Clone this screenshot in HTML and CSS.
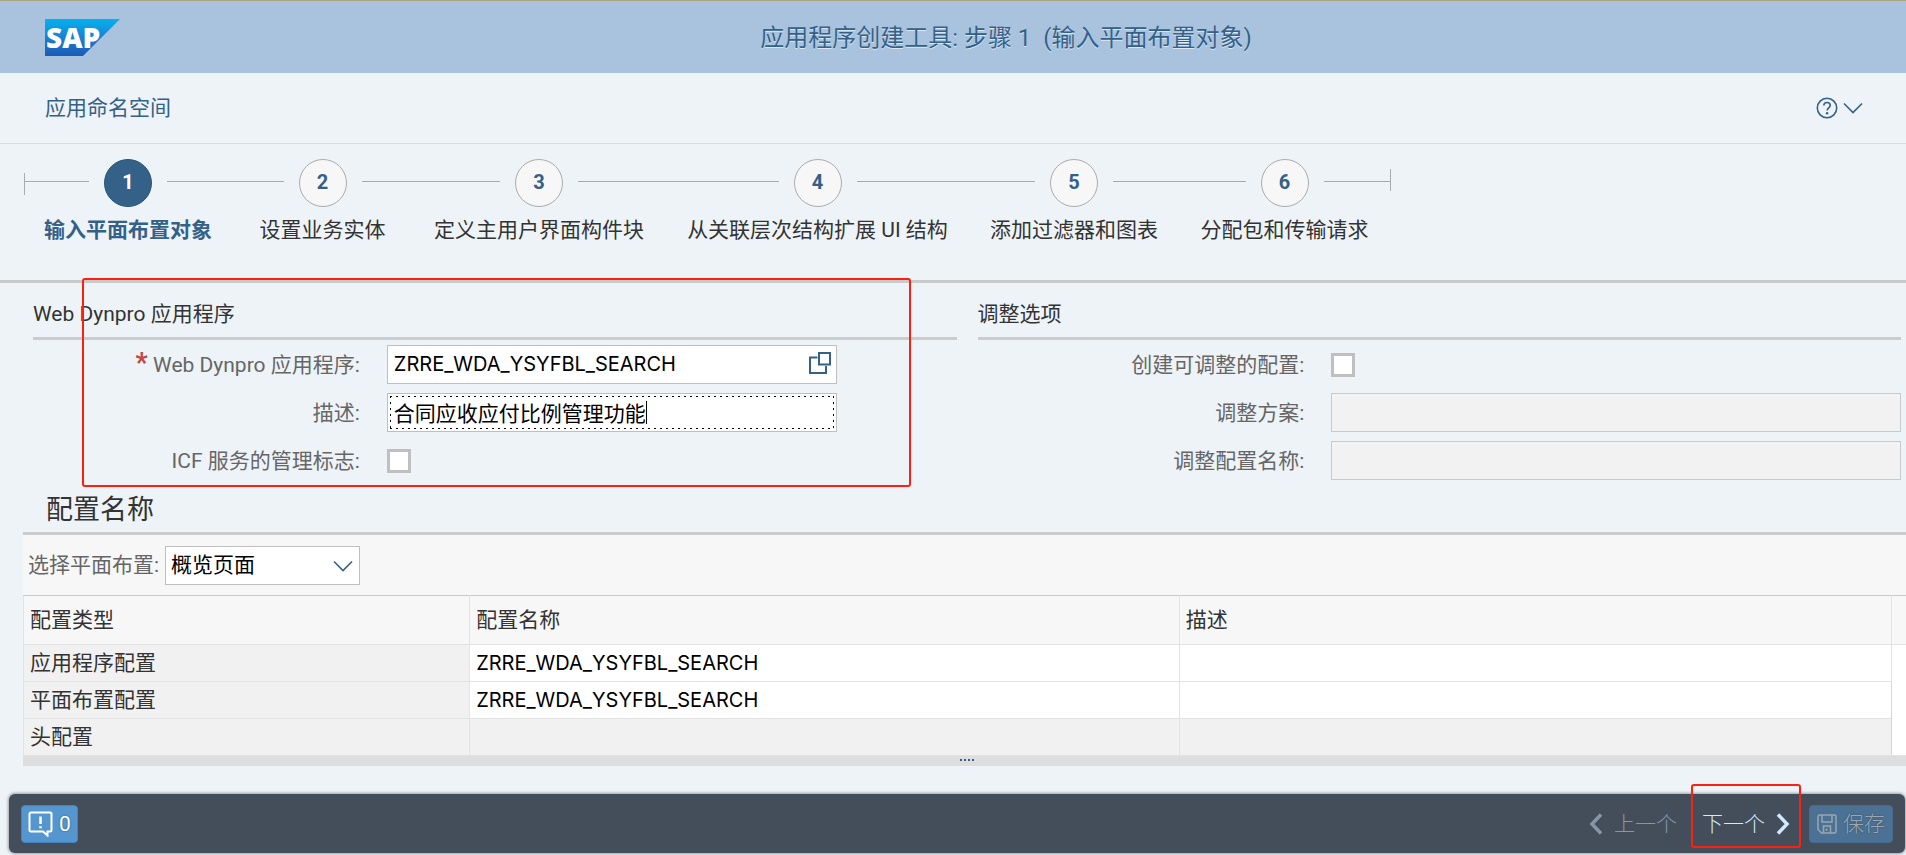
FILE: index.html
```html
<!DOCTYPE html>
<html lang="zh-CN">
<head>
<meta charset="utf-8">
<meta name="viewport" content="width=device-width, initial-scale=1">
<title>应用程序创建工具</title>
<link rel="stylesheet" href="styles.css">
</head>
<body>
<div class="page">
  <header class="shell">
    <svg class="logo" viewBox="0 0 75 37" role="img" aria-label="SAP">
      <defs><linearGradient id="sapBlue" x1="0" y1="0" x2="0" y2="1"><stop offset="0" stop-color="#04b3ee"/><stop offset=".5" stop-color="#1b7fd3"/><stop offset="1" stop-color="#1c5bb5"/></linearGradient></defs>
      <path d="M0 0H75L38 37H0Z" fill="url(#sapBlue)"/>
      <text class="logo-text" x="1" y="29">SAP</text>
    </svg>
    <h1 class="shell-title">应用程序创建工具: 步骤 1&nbsp; (输入平面布置对象)</h1>
  </header>

  <div class="subbar">
    <a class="namespace" href="#">应用命名空间</a>
    <button class="help" type="button" aria-label="帮助">
      <svg width="22" height="22" viewBox="0 0 22 22"><circle cx="11" cy="11" r="9.7"/><path d="M7.8 8.6C7.8 6.6 9.2 5.5 11 5.5s3.2 1.1 3.2 2.9c0 2.4-3 2.5-3 5.1"/><circle class="dot" cx="11.1" cy="16.2" r="1.2"/></svg>
      <svg width="20" height="12" viewBox="0 0 20 12"><path d="M1 1.5 10 10.5 19 1.5"/></svg>
    </button>
  </div>

  <ol class="roadmap">
    <li class="step step-current"><div class="track"><span class="line line-start"></span><span class="circle">1</span><span class="line"></span></div><span class="step-label">输入平面布置对象</span></li>
    <li class="step"><div class="track"><span class="line"></span><span class="circle">2</span><span class="line"></span></div><span class="step-label">设置业务实体</span></li>
    <li class="step"><div class="track"><span class="line"></span><span class="circle">3</span><span class="line"></span></div><span class="step-label">定义主用户界面构件块</span></li>
    <li class="step"><div class="track"><span class="line"></span><span class="circle">4</span><span class="line"></span></div><span class="step-label">从关联层次结构扩展 UI 结构</span></li>
    <li class="step"><div class="track"><span class="line"></span><span class="circle">5</span><span class="line"></span></div><span class="step-label">添加过滤器和图表</span></li>
    <li class="step"><div class="track"><span class="line"></span><span class="circle">6</span><span class="line line-end"></span></div><span class="step-label">分配包和传输请求</span></li>
  </ol>

  <main class="content">
    <form class="groups">
      <section class="group">
        <h2 class="group-title">Web Dynpro 应用程序</h2>
        <div class="form">
          <label class="label" for="app"><span class="required">*</span> Web Dynpro 应用程序:</label>
          <div class="field field-short">
            <input class="input code" id="app" type="text" value="ZRRE_WDA_YSYFBL_SEARCH">
            <button class="value-help" type="button" aria-label="值帮助"><svg width="22" height="22" viewBox="0 0 22 22"><path d="M8.5 5.5H1V21H17V14"/><path d="M10 1H21V12.5H10Z"/></svg></button>
          </div>
          <label class="label" for="desc">描述:</label>
          <div class="field field-short">
            <input class="input input-focus" id="desc" type="text" value="合同应收应付比例管理功能">
            <span class="caret"></span>
          </div>
          <label class="label" for="icf">ICF 服务的管理标志:</label>
          <div class="field"><input class="check" id="icf" type="checkbox"></div>
        </div>
      </section>
      <section class="group">
        <h2 class="group-title">调整选项</h2>
        <div class="form">
          <label class="label" for="adapt">创建可调整的配置:</label>
          <div class="field"><input class="check" id="adapt" type="checkbox"></div>
          <label class="label" for="schema">调整方案:</label>
          <div class="field"><input class="input" id="schema" type="text" disabled></div>
          <label class="label" for="adaptname">调整配置名称:</label>
          <div class="field"><input class="input" id="adaptname" type="text" disabled></div>
        </div>
      </section>
      <div class="mark mark-form"></div>
    </form>

    <section class="config">
      <h2 class="config-title">配置名称</h2>
      <div class="toolbar">
        <label class="toolbar-label" for="floor">选择平面布置:</label>
        <div class="select-box">
          <select class="select" id="floor"><option>概览页面</option></select>
          <svg class="select-arrow" width="20" height="12" viewBox="0 0 20 12"><path d="M1 1.5 10 10.5 19 1.5"/></svg>
        </div>
      </div>
      <table class="table">
        <colgroup><col class="col-type"><col class="col-name"><col class="col-desc"><col class="col-scroll"></colgroup>
        <thead><tr><th>配置类型</th><th>配置名称</th><th>描述</th><th></th></tr></thead>
        <tbody>
          <tr><td class="readonly">应用程序配置</td><td class="code">ZRRE_WDA_YSYFBL_SEARCH</td><td></td><td class="rail" rowspan="3"></td></tr>
          <tr><td class="readonly">平面布置配置</td><td class="code">ZRRE_WDA_YSYFBL_SEARCH</td><td></td></tr>
          <tr><td class="readonly">头配置</td><td class="readonly"></td><td class="readonly"></td></tr>
        </tbody>
      </table>
      <div class="resizer"><i></i><i></i><i></i><i></i></div>
    </section>
  </main>

  <footer class="footer">
    <button class="messages" type="button" aria-label="消息 0">
      <svg width="25" height="26" viewBox="0 0 25 26"><path d="M3 1.5H22Q23.5 1.5 23.5 3V19Q23.5 20.5 22 20.5H19.5V24.5L15 20.5H3Q1.5 20.5 1.5 19V3Q1.5 1.5 3 1.5Z"/><path class="bang" d="M12.5 5.5V13"/><path class="bang" d="M12.5 15.2V17.3"/></svg>
      <span>0</span>
    </button>
    <div class="actions">
      <button class="nav" type="button" disabled><svg width="14" height="22" viewBox="0 0 14 22"><path d="M12 1.5 3 11 12 20.5"/></svg>上一个</button>
      <button class="nav nav-next" type="button">下一个<svg width="14" height="22" viewBox="0 0 14 22"><path d="M2 1.5 11 11 2 20.5"/></svg><span class="mark mark-next"></span></button>
      <button class="save" type="button" disabled><svg width="20" height="20" viewBox="0 0 20 20"><path d="M2.5 1H17.5Q19 1 19 2.5V17.5Q19 19 17.5 19H4.5L1 15.5V2.5Q1 1 2.5 1ZM5 1V8H15V1M6.5 19V12H13.5V19M9.5 14.5V17"/></svg>保存</button>
    </div>
  </footer>
</div>
</body>
</html>
```
FILE: styles.css
```css
* { box-sizing: border-box; }
body {
  margin: 0;
  background: #eef3f8;
  color: #333;
  font: 400 21px/28px Roboto, "Noto Sans CJK SC", sans-serif;
}
h1, h2, ol { margin: 0; padding: 0; font-weight: inherit; }
button, input, select { font: inherit; color: inherit; margin: 0; }
button { border: 0; padding: 0; background: none; }
svg { display: block; flex: none; fill: none; stroke: currentColor; stroke-width: 2; }
.page { min-height: 100vh; display: flex; flex-direction: column; }

.shell {
  display: flex; align-items: center;
  height: 73px; padding-left: 45px;
  background: #a9c3df; border-top: 1px solid #a9a67f;
}
.logo { width: 75px; height: 37px; stroke: none; overflow: visible; }
.logo-text { font: 800 28px "Open Sans", sans-serif; fill: #fff; }
.shell-title {
  flex: 1; text-align: center; font-size: 24px; line-height: 32px;
  padding: 2px 14px 0 0; color: #346187; text-shadow: 0 1px 0 #dbe7f3;
}

.subbar {
  display: flex; align-items: center; justify-content: space-between;
  height: 71px; padding: 0 43px 0 45px; border-bottom: 1px solid #cfdfee; color: #346187;
}
.namespace { color: inherit; text-decoration: none; }
.help { display: flex; align-items: center; gap: 5px; }
.help svg { stroke-width: 1.6; }
.help .dot { fill: currentColor; stroke: none; }

.roadmap {
  display: grid; grid-template-columns: 208px 181px 252px 305px 208px 213px;
  list-style: none; padding: 15px 0 36px 24px; border-bottom: 3px solid #cacaca;
}
.step { text-align: center; white-space: nowrap; }
.track { display: flex; align-items: center; gap: 15px; margin-bottom: 9px; }
.line { flex: 1; border-top: 1px solid #a6abae; position: relative; top: -2px; }
.line-start::before, .line-end::after {
  content: ""; position: absolute; top: -9px; height: 22px; border-left: 1px solid #a6abae;
}
.line-start::before { left: 0; }
.line-end::after { right: 0; top: -13px; }
.circle {
  width: 48px; height: 48px; border: 1px solid #ababab; border-radius: 50%;
  background: #f7f7f7; color: #346187; font-weight: 700; font-size: 20px; line-height: 45px;
}
.step-current { color: #346187; font-weight: 700; }
.step-current .circle { background: #346187; border-color: #2c567a; color: #fff; }

.groups {
  position: relative; display: grid; grid-template-columns: 1fr 1fr; gap: 21px;
  padding: 17px 5px 0 33px;
}
.group-title { font-size: inherit; padding-bottom: 9px; border-bottom: 3px solid #cacccd; }
.form {
  display: grid; grid-template-columns: 327fr 570fr; column-gap: 27px; row-gap: 9px;
  grid-auto-rows: 39px; align-items: center; padding-top: 5px;
}
.label { text-align: right; color: #666; white-space: nowrap; }
.required { color: #c14646; font-weight: 700; font-size: 27px; line-height: 20px; }
.field { position: relative; display: flex; align-items: center; }
.field-short { width: 79%; }
.input {
  width: 100%; height: 39px; padding: 0 6px 2px; border: 1px solid #bfbfbf; border-radius: 0;
  background: #fff; color: #000;
}
.code { font-family: Inter, sans-serif; font-size: 20px; color: #000; }
.input:disabled { background: #f2f2f2; border-color: #c8cacb; }
.input-focus {
  --dash: #000 0 2px, transparent 2px 6px;
  background:
    repeating-linear-gradient(90deg, var(--dash)) 2px 2px / calc(100% - 4px) 1px no-repeat,
    repeating-linear-gradient(90deg, var(--dash)) 2px calc(100% - 2px) / calc(100% - 4px) 1px no-repeat,
    repeating-linear-gradient(var(--dash)) 2px 2px / 1px calc(100% - 4px) no-repeat,
    repeating-linear-gradient(var(--dash)) calc(100% - 2px) 2px / 1px calc(100% - 4px) no-repeat,
    #fff;
}
.input-focus:focus { outline: none; }
.caret { position: absolute; left: 259px; top: 8px; height: 23px; border-left: 1px solid #000; }
.value-help { position: absolute; right: 6px; top: 7px; color: #346187; }
.check {
  appearance: none; width: 24px; height: 24px; border: 3px solid #bfbfbf; background: #fff;
}
.mark { position: absolute; border: 2px solid #fc2010; border-radius: 3px; pointer-events: none; }
.mark-form { left: 82px; right: 995px; top: -5px; bottom: -7px; }

.config { padding-left: 23px; }
.config-title {
  font-size: 27px; line-height: 36px; padding: 12px 0 4px 23px; border-bottom: 3px solid #cacccd;
}
.toolbar { display: flex; align-items: center; gap: 6px; height: 60px; padding: 0 0 0 5px; background: #f7f7f7; }
.toolbar-label { color: #666; }
.select-box { position: relative; width: 195px; }
.select {
  appearance: none; display: block; width: 100%; height: 39px; padding: 0 5px; border: 1px solid #bfbfbf;
  border-radius: 0; background: #fff; color: #000;
}
.select-arrow { position: absolute; right: 7px; top: 14px; color: #346187; stroke-width: 1.6; pointer-events: none; }

.table { width: 100%; table-layout: fixed; border-collapse: collapse; background: #fff; }
.col-type { width: 23.7%; }
.col-name { width: 37.7%; }
.col-scroll { width: 15px; }
.table th, .table td { text-align: left; padding: 0 6px; border: 1px solid #e3e3e3; height: 37px; }
.table th { height: 49px; font-weight: inherit; background: #f7f7f7; border-top-color: #c8c8c8; }
.table .readonly { background: #f1f1f1; }
.table th:last-child, .table .rail { border-right: 0; border-left-color: #d6d6d6; }
.resizer {
  display: flex; justify-content: center; gap: 2px; height: 10px; padding: 3px 0 0 4px;
  background: #dedede;
}
.resizer i { width: 2px; height: 2px; background: #346187; }

.footer {
  display: flex; align-items: center; justify-content: space-between;
  height: 59px; margin: auto 1px 2px 9px; padding: 0 12px;
  background: #434e5a; border-radius: 6px; box-shadow: 0 0 3px 1px rgba(0,0,0,.35);
}
.messages, .save {
  display: flex; align-items: center; height: 38px; border-radius: 4px;
  background: #5496cd; border: 1px solid #4186c2; color: #fff; text-shadow: 0 0 2px rgba(0,0,0,.4);
}
.messages { gap: 6px; padding: 0 6px; }
.messages .bang { stroke-width: 2.5; }
.actions { display: flex; align-items: center; font-weight: 300; }
.nav { position: relative; display: flex; align-items: center; gap: 11px; color: #d1e8ff; }
.nav svg { stroke-width: 3.5; }
.nav:disabled { color: #8496a7; }
.nav-next { margin: 0 19px 0 25px; }
.mark-next { left: -11px; right: -11px; top: -26px; bottom: -10px; }
.save { gap: 6px; padding: 0 7px; background: #4b7295; border-color: #456c90; color: #9ba6b1; }
.save svg { stroke-width: 1.5; }
```
